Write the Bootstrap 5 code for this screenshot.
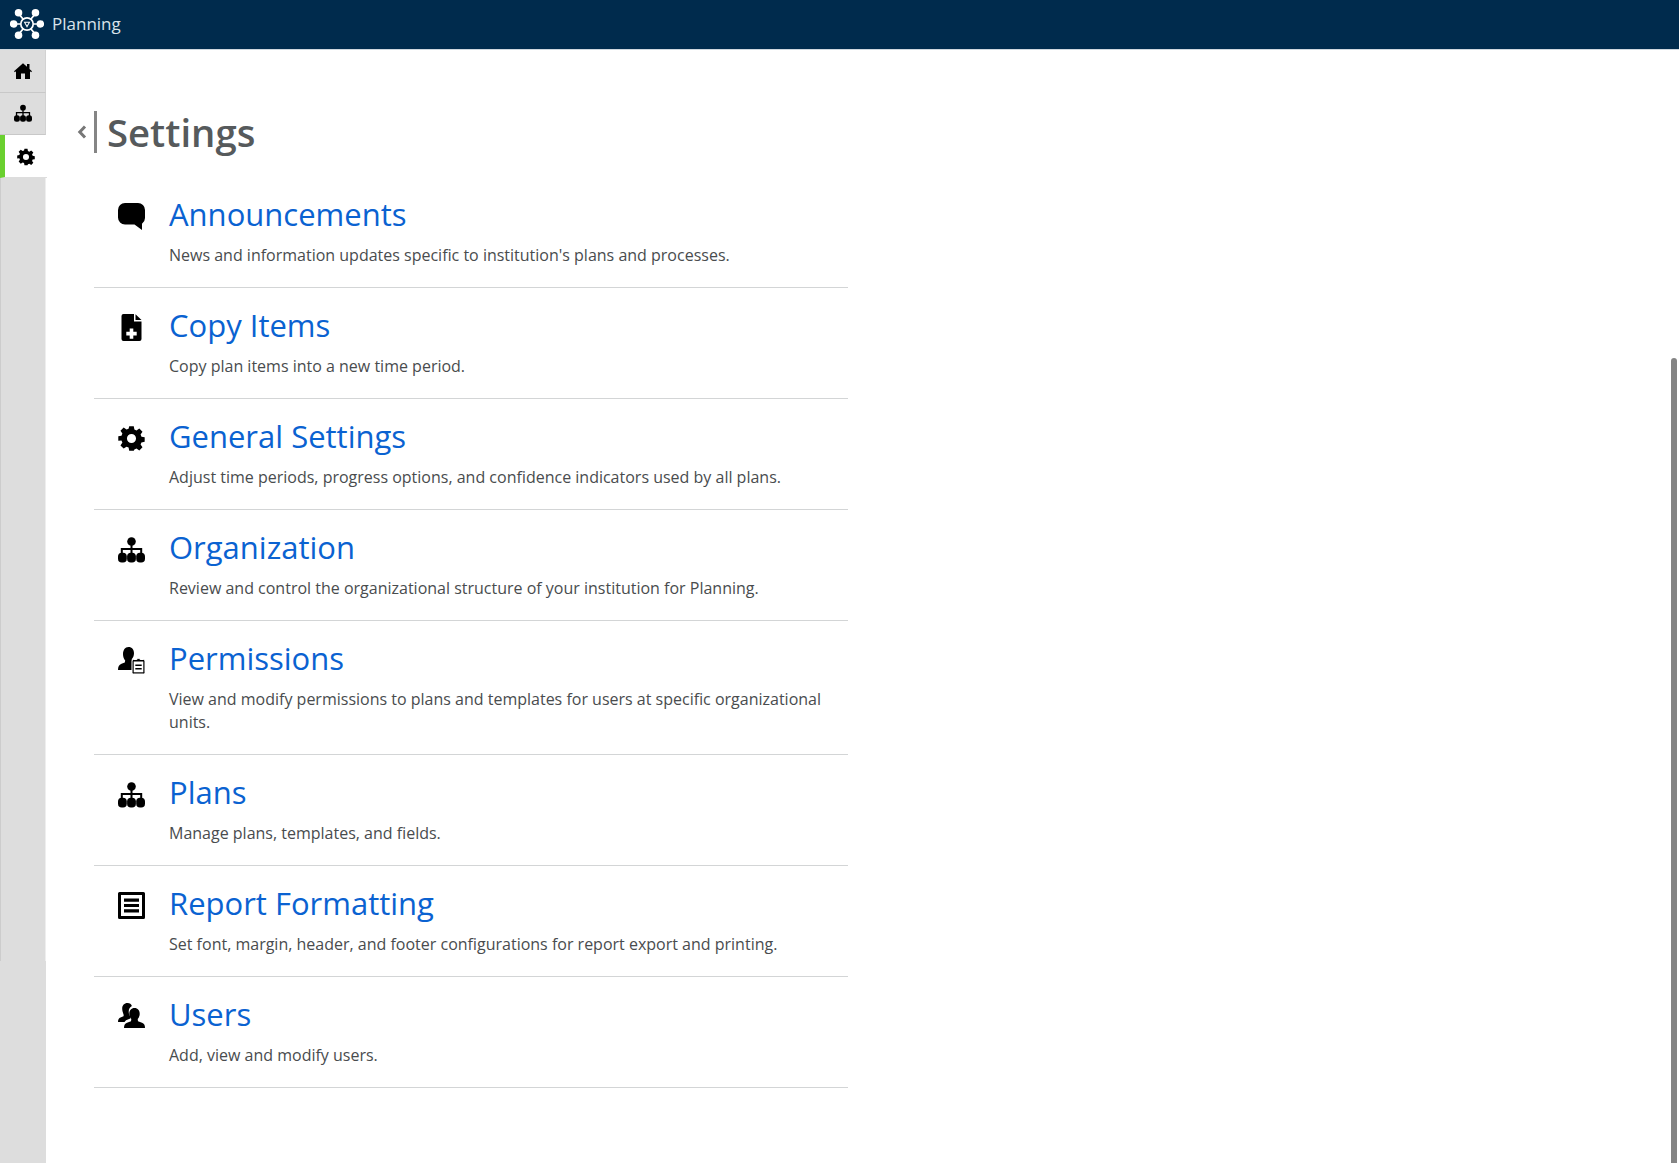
<!DOCTYPE html>
<html lang="en">
<head>
<meta charset="utf-8">
<title>Settings</title>
<link href="https://cdn.jsdelivr.net/npm/bootstrap@5.3.0/dist/css/bootstrap.min.css" rel="stylesheet">
<style>
html,body{height:100%;overflow:hidden}
body{font-family:"Open Sans",sans-serif;color:#494c4e;background:#fff}
.top-bar{height:50px;background:#002b4d;border-bottom:1px solid #cfd8df;padding-bottom:2px}
.top-bar svg{width:34px;height:32px;margin-left:10px}
.top-bar span{font-size:17px;color:#d9e3ea;margin-left:8px}
.shell{height:1113px}
.side{width:46px;background:#ddd;flex:none}
.tile{height:42.67px;border-bottom:1px solid #c8c8c8;border-right:1px solid #d2d2d2;width:46px}
.tile svg{width:18px;height:18px}
.tile.on{background:#fff;border-left:5px solid #6ad02f;border-right:0;border-bottom:1px solid #ddd;width:47px;position:relative;z-index:1;padding-top:2px}
.tile.on svg{margin-left:-1px}
.rail{height:783px;border-left:1px solid #ccc;border-right:1px solid #eee}
.page-head{padding:36px 0 0 31px;height:127px}
.back-ch{width:10px;height:16px;margin-right:7px}
.head-bar{width:3px;height:42px;background:#858585;margin-right:10px}
.page-head h1{font-size:38.3px;font-weight:600;color:#565a5c;margin:0;line-height:54px}
.items{width:754px;margin-left:48px}
.entry{border-bottom:1px solid #d3d5d6;padding:17px 24px 0 24px;gap:24px;height:111px}
.entry.tall{height:134px}
.entry svg{width:27px;height:27px;flex:none;margin-top:9px}
.entry a{display:block;font-size:31px;line-height:41px;color:#0a62d1;text-decoration:none;margin-bottom:9px}
.entry p{font-size:16px;line-height:23px;margin:0}
.sbar{position:absolute;right:2px;top:358px;bottom:0;width:6px;background:#848484;border-radius:3px 3px 0 0}
</style>
</head>
<body class="position-relative">
<svg width="0" height="0" class="position-absolute">
<defs>
<symbol id="i-org" viewBox="0 0 27 27">
<circle cx="13.500" cy="5.500" r="4.300"/><path d="M12.500 8h2v4h9.700v6h-2v-4h-7.700v4h-2v-4H4.800v4h-2v-6h9.700z"/><rect x="0" y="16.800" width="8.800" height="9.700" rx="3.800"/><rect x="9.100" y="16.800" width="8.800" height="9.700" rx="3.800"/><rect x="18.200" y="16.800" width="8.800" height="9.700" rx="3.800"/>
</symbol>
<symbol id="i-gear" viewBox="0 0 27 27">
<path fill-rule="evenodd" d="M11 0h5l.7 3.700 2.300 1 3.100-2.100 3.500 3.500-2.100 3.100 1 2.300 3.500.6v5l-3.600.7-.9 2.300 2.100 3.100-3.500 3.500-3.100-2.100-2.300 1L16 27h-5l-.7-3.600-2.300-.9-3.100 2.100-3.500-3.500 2.100-3.100-1-2.300L-1 16v-5l3.500-.6 1-2.300L1.400 5l3.500-3.500L8 3.600l2.300-.9zM13.500 8.500a5 5 0 1 0 0 10 5 5 0 0 0 0-10z" transform="translate(1.200 1.200) scale(.91)"/>
</symbol>
</defs>
</svg>
<header class="top-bar d-flex align-items-center">
<svg viewBox="0 0 36 34" aria-hidden="true">
<g stroke="#fff" stroke-width="1.800" fill="none"><path d="M9 6l5 6M27 6l-5 6M5 17h6M31 17h-6M9 28l5-6M27 28l-5-6"/><circle cx="18" cy="17" r="6.600"/></g>
<g fill="#fff"><circle cx="9" cy="5" r="4"/><circle cx="27" cy="5" r="4"/><circle cx="3.800" cy="17" r="4"/><circle cx="32.200" cy="17" r="4"/><circle cx="9" cy="29" r="4"/><circle cx="27" cy="29" r="4"/><path d="M14.500 14.500h7L18 21z"/></g>
<path d="M16.300 15.800h3.400L18 18.500z" fill="#002b4d"/>
</svg>
<span>Planning</span>
</header>
<div class="shell d-flex">
<nav class="side d-flex flex-column">
<div class="tile d-flex align-items-center justify-content-center"><svg viewBox="0 0 18 18" aria-hidden="true"><path d="M9 1.200l4 3.500V2h2.500v4.900L18 9.200l-.9 1-1.100-.9V17h-5v-5.500H7V17H2V9.300l-1.100.9-.9-1z"/></svg></div>
<div class="tile d-flex align-items-center justify-content-center"><svg aria-hidden="true"><use href="#i-org"/></svg></div>
<div class="tile on d-flex align-items-center justify-content-center"><svg aria-hidden="true"><use href="#i-gear"/></svg></div>
<div class="rail"></div>
</nav>
<main class="flex-grow-1">
<div class="page-head d-flex align-items-center align-self-start">
<svg class="back-ch" viewBox="0 0 10 16" aria-hidden="true"><path d="M8 2.500L2.800 8 8 13.500" fill="none" stroke="#777" stroke-width="3"/></svg>
<div class="head-bar"></div>
<h1>Settings</h1>
</div>
<div class="items">
<div class="entry d-flex">
<svg viewBox="0 0 27 27" aria-hidden="true"><path d="M7 0h13a7 7 0 0 1 7 7v8a7 7 0 0 1-3 5.700V27l-7.500-5.500H7a7 7 0 0 1-7-7V7a7 7 0 0 1 7-7z"/></svg>
<div><a href="#">Announcements</a><p>News and information updates specific to institution's plans and processes.</p></div>
</div>
<div class="entry d-flex">
<svg viewBox="0 0 27 27" aria-hidden="true"><path d="M5.500 0H16v7.500h7.500V25a2 2 0 0 1-2 2h-16a2 2 0 0 1-2-2V2a2 2 0 0 1 2-2z"/><path d="M17.500.3l6 5.700h-6z"/><path fill="#fff" d="M11.700 14.500h3.600v3.300h3.400v3.600h-3.400v3.300h-3.600v-3.300H8.300v-3.600h3.400z"/></svg>
<div><a href="#">Copy Items</a><p>Copy plan items into a new time period.</p></div>
</div>
<div class="entry d-flex">
<svg aria-hidden="true"><use href="#i-gear"/></svg>
<div><a href="#">General Settings</a><p>Adjust time periods, progress options, and confidence indicators used by all plans.</p></div>
</div>
<div class="entry d-flex">
<svg aria-hidden="true"><use href="#i-org"/></svg>
<div><a href="#">Organization</a><p>Review and control the organizational structure of your institution for Planning.</p></div>
</div>
<div class="entry tall d-flex">
<svg viewBox="0 0 27 27" aria-hidden="true"><path d="M10.500 0c3.500 0 5.500 2.700 5.500 6.300 0 2.500-1 4.600-2.300 6l.3 2 3 1.200V23H0c0-3.500 1-5.200 3.500-6.200l3.300-1.400.4-2C5.900 12 5 9.800 5 7.300 5 3.200 7 0 10.500 0z"/><path stroke="#fff" stroke-width="1" d="M15.500 12.500h3.300a2 2 0 0 1 3.400 0h3.300a1.500 1.500 0 0 1 1.500 1.500V25.500a1.500 1.500 0 0 1-1.500 1.500H15.500a1.500 1.500 0 0 1-1.500-1.500V14a1.500 1.500 0 0 1 1.500-1.500z"/><path fill="#fff" d="M15.700 14.500h9.600v10.800h-9.600z"/><path d="M17.300 17.500h6.400v1.500h-6.400zM17.300 21h6.400v1.500h-6.400z"/></svg>
<div><a href="#">Permissions</a><p>View and modify permissions to plans and templates for users at specific organizational units.</p></div>
</div>
<div class="entry d-flex">
<svg aria-hidden="true"><use href="#i-org"/></svg>
<div><a href="#">Plans</a><p>Manage plans, templates, and fields.</p></div>
</div>
<div class="entry d-flex">
<svg viewBox="0 0 27 27" aria-hidden="true"><path fill-rule="evenodd" d="M1.500 0h24A1.500 1.500 0 0 1 27 1.500v24a1.500 1.500 0 0 1-1.500 1.500h-24A1.500 1.500 0 0 1 0 25.500v-24A1.500 1.500 0 0 1 1.500 0zM3 3v21h21V3z"/><path d="M6 6.500h15v3.200H6zM6 11.900h15v3.200H6zM6 17.300h15v3.200H6z"/></svg>
<div><a href="#">Report Formatting</a><p>Set font, margin, header, and footer configurations for report export and printing.</p></div>
</div>
<div class="entry d-flex">
<svg viewBox="0 0 27 27" aria-hidden="true"><path d="M9.500 0c2.300 0 3.800 1.300 4.400 3.100-2 .9-3.200 3-3.200 5.700 0 2 .7 3.900 1.800 5.200l-.2 1.400-4.300 1.800-1.500 1.800H0c0-2.600 1-3.900 2.500-4.500l3-1.200.2-1.300C4.700 9 4.200 7.500 4.200 5.700 4.200 2.300 6.300 0 9.500 0z"/><path d="M16.500 5c3.300 0 5.200 2.500 5.200 5.700 0 2.200-.8 4-2 5.300l.3 2.200 4 1.600c2 .8 3 2.400 3 5.200H6c0-2.800 1-4.400 3-5.200l4-1.600.3-2.200c-1.200-1.300-2-3.100-2-5.300C11.300 7.500 13.200 5 16.500 5z"/></svg>
<div><a href="#">Users</a><p>Add, view and modify users.</p></div>
</div>
</div>
</main>
</div>
<div class="sbar"></div>
<script src="https://cdn.jsdelivr.net/npm/bootstrap@5.3.0/dist/js/bootstrap.bundle.min.js"></script>
</body>
</html>
